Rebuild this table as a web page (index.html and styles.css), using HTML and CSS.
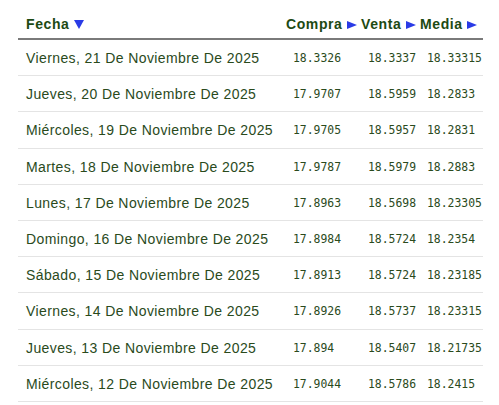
FILE: index.html
```html
<!DOCTYPE html>
<html lang="es">
<head>
<meta charset="utf-8">
<title>Tipo de cambio</title>
<link rel="stylesheet" href="styles.css">
</head>
<body>
<div class="wrap">
<table class="rates">
  <colgroup>
    <col class="c-date">
    <col class="c-buy">
    <col class="c-sell">
    <col class="c-avg">
  </colgroup>
  <thead>
    <tr>
      <th>Fecha <svg class="arrow" width="10" height="9" viewBox="0 0 10 9"><polygon points="0,0 10,0 5,9" /></svg></th>
      <th>Compra <svg class="arrow" width="10" height="8" viewBox="0 0 10 8"><polygon points="0,0 10,4 0,8" /></svg></th>
      <th>Venta <svg class="arrow" width="10" height="8" viewBox="0 0 10 8"><polygon points="0,0 10,4 0,8" /></svg></th>
      <th>Media <svg class="arrow" width="10" height="8" viewBox="0 0 10 8"><polygon points="0,0 10,4 0,8" /></svg></th>
    </tr>
  </thead>
  <tbody>
    <tr><td>Viernes, 21 De Noviembre De 2025</td><td class="num">18.3326</td><td class="num">18.3337</td><td class="num n-avg">18.33315</td></tr>
    <tr><td>Jueves, 20 De Noviembre De 2025</td><td class="num">17.9707</td><td class="num">18.5959</td><td class="num n-avg">18.2833</td></tr>
    <tr><td>Miércoles, 19 De Noviembre De 2025</td><td class="num">17.9705</td><td class="num">18.5957</td><td class="num n-avg">18.2831</td></tr>
    <tr><td>Martes, 18 De Noviembre De 2025</td><td class="num">17.9787</td><td class="num">18.5979</td><td class="num n-avg">18.2883</td></tr>
    <tr><td>Lunes, 17 De Noviembre De 2025</td><td class="num">17.8963</td><td class="num">18.5698</td><td class="num n-avg">18.23305</td></tr>
    <tr><td>Domingo, 16 De Noviembre De 2025</td><td class="num">17.8984</td><td class="num">18.5724</td><td class="num n-avg">18.2354</td></tr>
    <tr><td>Sábado, 15 De Noviembre De 2025</td><td class="num">17.8913</td><td class="num">18.5724</td><td class="num n-avg">18.23185</td></tr>
    <tr><td>Viernes, 14 De Noviembre De 2025</td><td class="num">17.8926</td><td class="num">18.5737</td><td class="num n-avg">18.23315</td></tr>
    <tr><td>Jueves, 13 De Noviembre De 2025</td><td class="num">17.894</td><td class="num">18.5407</td><td class="num n-avg">18.21735</td></tr>
    <tr><td>Miércoles, 12 De Noviembre De 2025</td><td class="num">17.9044</td><td class="num">18.5786</td><td class="num n-avg">18.2415</td></tr>
  </tbody>
</table>
</div>
</body>
</html>
```
FILE: styles.css
```css
html, body {
  margin: 0;
  padding: 0;
  background: #ffffff;
}
.wrap {
  padding: 7px 16px 0 18px;
}
.rates {
  width: 465px;
  table-layout: fixed;
  border-collapse: collapse;
  font-family: "Liberation Sans", Arial, sans-serif;
}
.c-date { width: 260px; }
.c-buy { width: 75px; }
.c-sell { width: 59px; }
.c-avg { width: 71px; }
.rates th {
  text-align: left;
  font-size: 14px;
  font-weight: bold;
  color: #1d4a13;
  letter-spacing: 0.6px;
  line-height: 18px;
  padding: 8px 0 5px 8px;
  white-space: nowrap;
  border-bottom: 2px solid #7a7a7a;
}
.arrow {
  fill: #2a3be6;
  vertical-align: 0px;
}
.rates td {
  font-size: 14px;
  color: #2a4a1c;
  letter-spacing: 0.4px;
  line-height: 19.2px;
  padding: 9px 0 7px 8px;
  white-space: nowrap;
  border-bottom: 1px solid #e4e4e4;
}
.rates td.num {
  font-family: "DejaVu Sans Mono", "Liberation Mono", monospace;
  font-size: 11.4px;
  letter-spacing: 0;
  padding-left: 15px;
}
.rates td.n-avg {
  padding-left: 15px;
}
```
